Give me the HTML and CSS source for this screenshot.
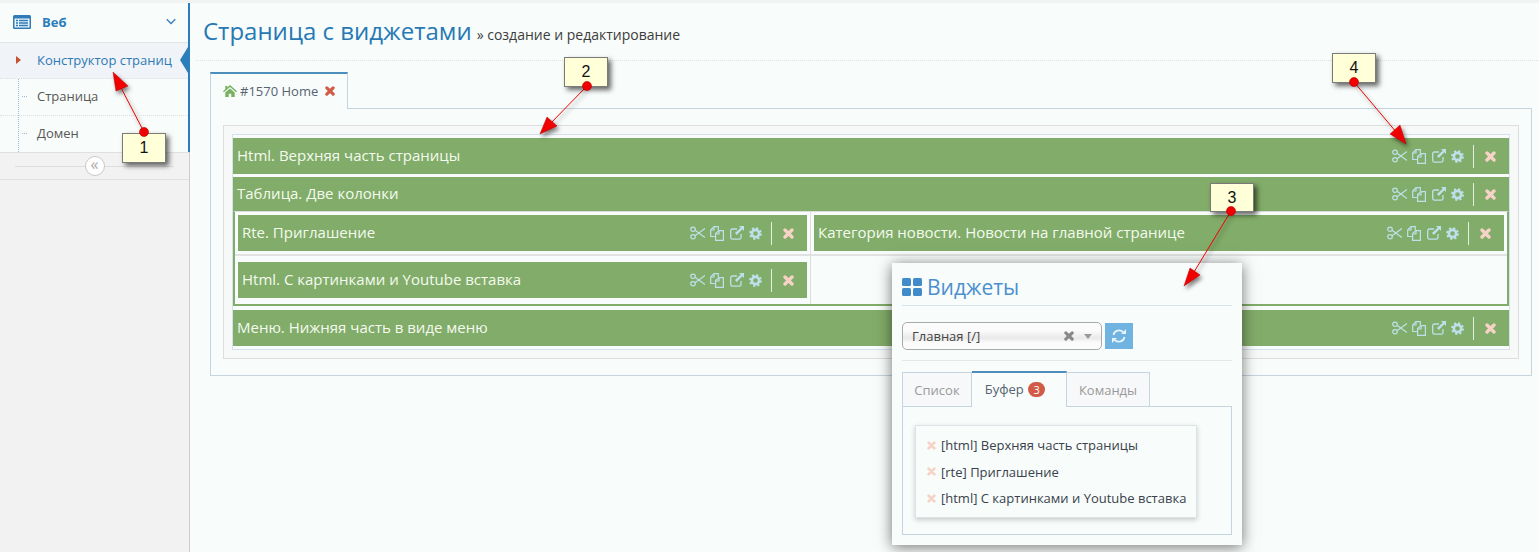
FILE: index.html
```html
<!DOCTYPE html>
<html lang="ru">
<head>
<meta charset="utf-8">
<title>Страница с виджетами</title>
<link rel="stylesheet" href="styles.css">
</head>
<body>
<svg class="defs" width="0" height="0">
  <symbol id="i-cut" viewBox="0 0 15 14"><g fill="none" stroke="currentColor" stroke-width="1.2"><ellipse cx="3" cy="3.2" rx="2.3" ry="2.1"/><ellipse cx="3" cy="10.8" rx="2.3" ry="2.1"/><path d="M5 4.3 15 11.6M5 9.7 15 2.4"/></g></symbol>
  <symbol id="i-copy" viewBox="0 0 14 15"><g fill="none" stroke="currentColor" stroke-width="1.2"><path d="M6 10.5H.7V4L4 .7h4.3V4.5"/><path d="M4 .9V4H1"/><path d="M5.6 7.5 9 4.6h4.4v9.8H5.6z"/><path d="M9 5v3H5.8"/></g></symbol>
  <symbol id="i-ext" viewBox="0 0 14 14"><g fill="none" stroke="currentColor" stroke-width="1.3"><path d="M7 3H2.5Q.7 3 .7 4.8v6.6q0 1.8 1.8 1.8h6.7q1.8 0 1.8-1.8V8"/></g><path fill="currentColor" d="M9 0h5v5l-1.7-1.7L6.8 8.9 5 7.100 10.700 1.700z"/></symbol>
  <symbol id="i-cog" viewBox="0 0 14 14"><circle cx="7" cy="7" r="3.900" fill="none" stroke="currentColor" stroke-width="2.800"/><circle cx="7" cy="7" r="5.800" fill="none" stroke="currentColor" stroke-width="2.200" stroke-dasharray="2.280 2.280"/></symbol>
  <symbol id="i-x" viewBox="0 0 11 11"><path fill="none" stroke="currentColor" stroke-width="3.400" stroke-linecap="round" d="M2 2 9 9M9 2 2 9"/></symbol>
</svg>

<aside class="sidebar">
  <nav class="side-nav">
    <div class="side-head">
      <svg class="side-icon" viewBox="0 0 18 14"><rect width="18" height="14" rx="1.500" fill="#2e7bb8"/><rect x="1.500" y="3.500" width="15" height="9" fill="#eef6fb"/><path d="M3 5.500h2M6 5.500h9M3 8h2M6 8h9M3 10.500h2M6 10.500h9" stroke="#2e7bb8" stroke-width="1.300"/></svg>
      <span class="side-head-text">Веб</span>
      <svg class="side-chev" viewBox="0 0 10 7"><path d="M.7 1.200 5 5.400 9.300 1.200" fill="none" stroke="#3f80b5" stroke-width="1.400"/></svg>
    </div>
    <ul class="side-list">
      <li class="side-item active">Конструктор страниц</li>
      <li class="side-item">Страница</li>
      <li class="side-item">Домен</li>
    </ul>
  </nav>
  <div class="side-toggle"><span class="toggle-btn">«</span></div>
</aside>

<main class="content">
  <header class="page-header">
    <h1 class="page-title">Страница с виджетами</h1>
    <span class="page-sub">» создание и редактирование</span>
  </header>

  <div class="tabs">
    <div class="tab">
      <svg class="tab-home" viewBox="0 0 14 12"><path fill="#78b060" d="M7 0 14 6.300l-.9 1L7 1.900 .9 7.300l-.9-1L2.300 4.200V1h2v1.400zM2.300 7.600 7 3.500l4.700 4.100V12H8.300V8.700H5.700V12H2.300z"/></svg>
      <span>#1570 Home</span>
      <svg class="tab-x"><use href="#i-x"/></svg>
    </div>
  </div>

  <section class="pane">
    <div class="box">
      <div class="stack">
        <div class="row">
          <span class="row-title">Html. Верхняя часть страницы</span>
          <span class="tools"><svg class="t-cut"><use href="#i-cut"/></svg><svg class="t-copy"><use href="#i-copy"/></svg><svg class="t-ext"><use href="#i-ext"/></svg><svg class="t-cog"><use href="#i-cog"/></svg><i class="t-sep"></i><svg class="t-x"><use href="#i-x"/></svg></span>
        </div>
        <div class="row row-head">
          <span class="row-title">Таблица. Две колонки</span>
          <span class="tools"><svg class="t-cut"><use href="#i-cut"/></svg><svg class="t-copy"><use href="#i-copy"/></svg><svg class="t-ext"><use href="#i-ext"/></svg><svg class="t-cog"><use href="#i-cog"/></svg><i class="t-sep"></i><svg class="t-x"><use href="#i-x"/></svg></span>
        </div>
        <div class="columns">
          <div class="col col-left">
            <div class="cell cell-top">
              <div class="row">
                <span class="row-title">Rte. Приглашение</span>
                <span class="tools"><svg class="t-cut"><use href="#i-cut"/></svg><svg class="t-copy"><use href="#i-copy"/></svg><svg class="t-ext"><use href="#i-ext"/></svg><svg class="t-cog"><use href="#i-cog"/></svg><i class="t-sep"></i><svg class="t-x"><use href="#i-x"/></svg></span>
              </div>
            </div>
            <div class="cell cell-bottom">
              <div class="row">
                <span class="row-title">Html. С картинками и Youtube вставка</span>
                <span class="tools"><svg class="t-cut"><use href="#i-cut"/></svg><svg class="t-copy"><use href="#i-copy"/></svg><svg class="t-ext"><use href="#i-ext"/></svg><svg class="t-cog"><use href="#i-cog"/></svg><i class="t-sep"></i><svg class="t-x"><use href="#i-x"/></svg></span>
              </div>
            </div>
          </div>
          <div class="col col-right">
            <div class="cell cell-top">
              <div class="row">
                <span class="row-title">Категория новости. Новости на главной странице</span>
                <span class="tools"><svg class="t-cut"><use href="#i-cut"/></svg><svg class="t-copy"><use href="#i-copy"/></svg><svg class="t-ext"><use href="#i-ext"/></svg><svg class="t-cog"><use href="#i-cog"/></svg><i class="t-sep"></i><svg class="t-x"><use href="#i-x"/></svg></span>
              </div>
            </div>
          </div>
        </div>
        <div class="row">
          <span class="row-title">Меню. Нижняя часть в виде меню</span>
          <span class="tools"><svg class="t-cut"><use href="#i-cut"/></svg><svg class="t-copy"><use href="#i-copy"/></svg><svg class="t-ext"><use href="#i-ext"/></svg><svg class="t-cog"><use href="#i-cog"/></svg><i class="t-sep"></i><svg class="t-x"><use href="#i-x"/></svg></span>
        </div>
      </div>
    </div>
  </section>
</main>

<section class="widgets">
  <div class="w-head">
    <svg class="w-icon" viewBox="0 0 20 18"><g fill="#428bca"><rect width="9" height="8" rx="1.500"/><rect x="11" width="9" height="8" rx="1.500"/><rect y="10" width="9" height="8" rx="1.500"/><rect x="11" y="10" width="9" height="8" rx="1.500"/></g></svg>
    <span class="w-title">Виджеты</span>
  </div>
  <div class="w-select-row">
    <div class="w-select">
      <span class="w-select-text">Главная [/]</span>
      <svg class="w-clear"><use href="#i-x"/></svg>
      <i class="w-caret"></i>
    </div>
    <button class="w-refresh" type="button">
      <svg viewBox="0 0 14 14" width="14" height="14"><g fill="none" stroke="#e8f3fa" stroke-width="1.800"><path d="M1.500 6A5.600 5.600 0 0 1 11.200 3.200"/><path d="M12.500 8A5.600 5.600 0 0 1 2.800 10.800"/></g><path fill="#e8f3fa" d="M9 5h5V0zM5 9H0v5z"/></svg>
    </button>
  </div>
  <div class="w-tabs">
    <div class="w-tab w-tab-1">Список</div>
    <div class="w-tab w-tab-2 active">Буфер <b class="badge">3</b></div>
    <div class="w-tab w-tab-3">Команды</div>
  </div>
  <div class="w-pane">
    <ul class="w-list">
      <li><svg class="w-item-x"><use href="#i-x"/></svg>[html] Верхняя часть страницы</li>
      <li><svg class="w-item-x"><use href="#i-x"/></svg>[rte] Приглашение</li>
      <li><svg class="w-item-x"><use href="#i-x"/></svg>[html] С картинками и Youtube вставка</li>
    </ul>
  </div>
</section>

<svg class="arrows" width="1539" height="552" viewBox="0 0 1539 552">
  <g class="arrow-shadow">
    <path class="line" d="M144 132 118 82"/><polygon class="head" points="113,72 128,86 116,91"/>
    <path class="line" d="M587 86 548 126"/><polygon class="head" points="540,134 547,117 557,126"/>
    <path class="line" d="M1231 211 1194 272"/><polygon class="head" points="1184,286 1190,268 1200,275"/>
    <path class="line" d="M1354 82 1397 133"/><polygon class="head" points="1406,144 1390,134 1400,125"/>
  </g>
</svg>

<div class="note note-1">1</div>
<div class="note note-2">2</div>
<div class="note note-3">3</div>
<div class="note note-4">4</div>

<svg class="dots" width="1539" height="552" viewBox="0 0 1539 552">
  <g fill="#f00000" stroke="#b00000" stroke-width=".6"><circle cx="144" cy="132" r="4.500"/><circle cx="587" cy="86" r="4.500"/><circle cx="1231" cy="211" r="4.500"/><circle cx="1354" cy="82" r="4.500"/></g>
</svg>
</body>
</html>
```

FILE: styles.css
```css
* { box-sizing: border-box; }

html, body { margin: 0; padding: 0; }

body {
  position: relative;
  display: flex;
  width: 1539px;
  height: 552px;
  overflow: hidden;
  background: #f8fcfa;
  border-top: 3px solid #e6e8e7;
  border-image: linear-gradient(#f1f3f2 66%, #dcdedd 66%) 3;
  font-family: "Open Sans", sans-serif;
  font-size: 13px;
  color: #444;
}

.defs { position: absolute; }

/* Sidebar */
.sidebar {
  flex: 0 0 190px;
  background: #f2f2f2;
  border-right: 1px solid #ccc;
}

.side-nav {
  background: #f8fcfa;
  border-right: 2px solid #2b7dbc;
  margin-right: -1px;
}

.side-head {
  display: flex;
  align-items: center;
  height: 40px;
  padding: 0 0 2px 13px;
  border-bottom: 1px solid #e3e5e4;
}

.side-icon { width: 18px; height: 14px; }

.side-head-text {
  margin-left: 11px;
  font-weight: 700;
  font-size: 13px;
  color: #2b7dbc;
}

.side-chev { width: 10px; height: 7px; margin-left: auto; margin-right: 12px; }

.side-list {
  position: relative;
  margin: 0;
  padding: 0;
  list-style: none;
}

.side-list::before {
  content: "";
  position: absolute;
  left: 18px;
  top: 0;
  bottom: 0;
  border-left: 1px dotted #9dbdd6;
}

.side-item {
  position: relative;
  height: 37px;
  padding-left: 37px;
  line-height: 35px;
  font-size: 13px;
  color: #585858;
  border-bottom: 1px dotted #e0e0e0;
}

.side-item::before {
  content: "";
  position: absolute;
  left: 22px;
  top: 17px;
  width: 5px;
  border-top: 1px dotted #9dbdd6;
}

.side-item:last-child { height: 36px; border-bottom: 0; }

.side-item.active { height: 36px; background: #f0f4f9; color: #2e79b4; }

.side-item.active::before {
  left: 16px;
  top: 13px;
  width: 0;
  border: 0;
  border-left: 5px solid #c8502f;
  border-top: 4px solid transparent;
  border-bottom: 4px solid transparent;
}

.side-item.active::after {
  content: "";
  position: absolute;
  right: 0;
  top: 4px;
  border-right: 8px solid #2b7dbc;
  border-top: 13px solid transparent;
  border-bottom: 13px solid transparent;
}

.side-toggle {
  position: relative;
  display: flex;
  justify-content: center;
  align-items: center;
  height: 28px;
  border-top: 1px solid #e0e0e0;
  border-bottom: 1px solid #e0e0e0;
  background: #f2f2f2;
}

.side-toggle::before {
  content: "";
  position: absolute;
  left: 15px;
  right: 15px;
  top: 13px;
  border-top: 1px solid #dedede;
}

.toggle-btn {
  position: relative;
  width: 20px;
  height: 20px;
  border: 1px solid #c8c8c8;
  border-radius: 50%;
  background: #fff;
  color: #aaa;
  font-size: 16px;
  line-height: 15px;
  text-align: center;
}

/* Main */
.content {
  flex: 1;
  min-width: 0;
}

.page-header {
  display: flex;
  align-items: baseline;
  height: 58px;
  margin-left: 6px;
  padding: 11px 0 0 7px;
  border-bottom: 1px dotted #dfe3e2;
}

.page-title {
  margin: 0 5px 0 0;
  font-size: 24px;
  font-weight: 400;
  line-height: 34px;
  color: #2679b5;
}

.page-sub { font-size: 14px; color: #3c3c3c; }

.tabs {
  position: relative;
  z-index: 1;
  display: flex;
  margin: 11px 0 -1px 20px;
}

.tab {
  display: flex;
  align-items: center;
  width: 138px;
  height: 37px;
  padding: 0 0 2px 12px;
  border: 1px solid #c5d5e0;
  border-top: 2px solid #4c8fbd;
  border-bottom: 0;
  background: #f8fcfa;
  color: #576373;
  font-size: 13px;
}

.tab-home { width: 14px; height: 12px; margin-right: 3px; }

.tab-x { width: 10px; height: 10px; margin-left: 7px; color: #d15b47; }

.pane {
  width: 1322px;
  height: 268px;
  margin-left: 20px;
  padding: 16px 12px 16px;
  border: 1px solid #c5d5e0;
}

.box {
  height: 234px;
  padding: 8px;
  border: 1px solid #ddd;
  background: #f7f8f8;
}

.stack {
  height: 216px;
  padding: 3px 0 0;
  border: 1px solid #d5e2ee;
  background: #f8fcfa;
}

/* Widget rows */
.row {
  display: flex;
  align-items: center;
  justify-content: space-between;
  height: 36px;
  margin-bottom: 3px;
  padding: 0 13px 0 4px;
  background: #82ac69;
  color: #f4fbef;
  font-size: 15px;
}

.row-title { padding-bottom: 2px; }

.row-head { height: 34px; margin-bottom: 0; }

.tools { display: flex; align-items: center; color: #bfe0ea; }

.tools svg { display: block; }

.t-cut { width: 15px; height: 14px; }
.t-copy { width: 14px; height: 15px; margin-left: 5px; }
.t-ext { width: 14px; height: 14px; margin-left: 6px; }
.t-cog { width: 13px; height: 13px; margin-left: 5px; }
.t-sep { width: 1px; height: 23px; margin: 0 11px 0 9px; background: #e4efe0; }
.t-x { width: 11px; height: 11px; color: #f6d3c6; }

.columns {
  display: grid;
  grid-template-columns: 576px 1fr;
  height: 95px;
  margin-bottom: 4px;
  border: 2px solid #82ac69;
  border-top: 1px solid #dcdcdc;
  background: #f8fcfa;
}

.col-left { border-right: 1px solid #dedede; }

.cell { padding: 3px 3px 0; }

.cell-top { height: 44px; border-bottom: 2px solid #e2e2e2; }

.cell-bottom { padding-top: 6px; }

.cell .row { margin: 0; }

/* Widgets popup */
.widgets {
  position: absolute;
  left: 892px;
  top: 260px;
  width: 350px;
  height: 282px;
  padding: 0 10px;
  background: #f8fcfa;
  box-shadow: 0 2px 14px rgba(0, 0, 0, .55);
}

.w-head {
  display: flex;
  align-items: center;
  height: 43px;
  padding-top: 5px;
  border-bottom: 1px solid #d5e3ec;
}

.w-icon { width: 20px; height: 18px; }

.w-title {
  margin-left: 5px;
  font-size: 21px;
  line-height: 30px;
  color: #4a90cf;
}

.w-select-row {
  display: flex;
  align-items: flex-start;
  height: 55px;
  padding-top: 16px;
  border-bottom: 1px solid #e3e8e8;
}

.w-select {
  display: flex;
  align-items: center;
  width: 200px;
  height: 28px;
  padding: 0 9px;
  border: 1px solid #aaa;
  border-radius: 5px;
  background: linear-gradient(#fbfbfb 30%, #e9e9e9 58%, #fbfbfb 75%);
  color: #444;
  font-size: 13px;
}

.w-clear { width: 10px; height: 10px; margin-left: auto; color: #888; }

.w-caret {
  margin-left: 10px;
  border-top: 5px solid #999;
  border-left: 4.500px solid transparent;
  border-right: 4.500px solid transparent;
}

.w-refresh {
  display: flex;
  align-items: center;
  justify-content: center;
  width: 28px;
  height: 26px;
  margin: 1px 0 0 3px;
  padding: 0;
  border: 0;
  background: #6fb3e0;
}

.w-tabs {
  position: relative;
  z-index: 1;
  display: flex;
  margin-top: 10px;
  height: 36px;
}

.w-tab {
  height: 35px;
  border: 1px solid #c5d5e0;
  border-left: 0;
  background: #f7f8f9;
  color: #9a9a9a;
  font-size: 13px;
  line-height: 35px;
  text-align: center;
}

.w-tab-1 { width: 70px; border-left: 1px solid #c5d5e0; margin-top: 1px; }
.w-tab-2 { width: 95px; padding-right: 8px; }
.w-tab-3 { width: 83px; margin-top: 1px; }

.w-tab.active {
  height: 36px;
  border-top: 2px solid #4c8fbd;
  border-bottom: 0;
  background: #f8fcfa;
  color: #576373;
  line-height: 33px;
}

.badge {
  display: inline-block;
  width: 17px;
  height: 15px;
  margin-left: 1px;
  border-radius: 8px;
  background: #d15b47;
  color: #fff;
  font-size: 11px;
  font-weight: 400;
  line-height: 15px;
  vertical-align: 0;
}

.w-pane {
  height: 129px;
  margin-top: -1px;
  padding: 18px 12px;
  border: 1px solid #c5d5e0;
}

.w-list {
  width: 282px;
  height: 93px;
  margin: 0;
  padding: 6px 0 0 11px;
  list-style: none;
  border: 1px solid #dde3e6;
  box-shadow: 0 2px 5px rgba(0, 0, 0, .2);
  color: #39424d;
  font-size: 13px;
}

.w-list li { display: flex; align-items: center; height: 26.500px; }

.w-item-x { width: 9px; height: 9px; margin-right: 5px; color: #f6d3c6; }

/* Annotations */
.arrows, .dots {
  position: absolute;
  left: 0;
  top: -3px;
  pointer-events: none;
}

.arrow-shadow { filter: drop-shadow(2px 3px 2px rgba(0, 0, 0, .5)); }

.line { stroke: #f00000; stroke-width: 1; fill: none; }

.head { fill: #f00000; stroke: #c00000; stroke-width: .5; }

.note {
  position: absolute;
  width: 44px;
  height: 30px;
  border: 1px solid #7a7a7a;
  background: #ffffd8;
  box-shadow: 3px 3px 5px rgba(0, 0, 0, .6);
  color: #111;
  font-family: "Liberation Sans", Arial, sans-serif;
  font-size: 16px;
  line-height: 27px;
  text-align: center;
}

.note-1 { left: 122px; top: 130px; }
.note-2 { left: 564px; top: 54px; }
.note-3 { left: 1210px; top: 180px; height: 29px; }
.note-4 { left: 1332px; top: 50px; }
```
